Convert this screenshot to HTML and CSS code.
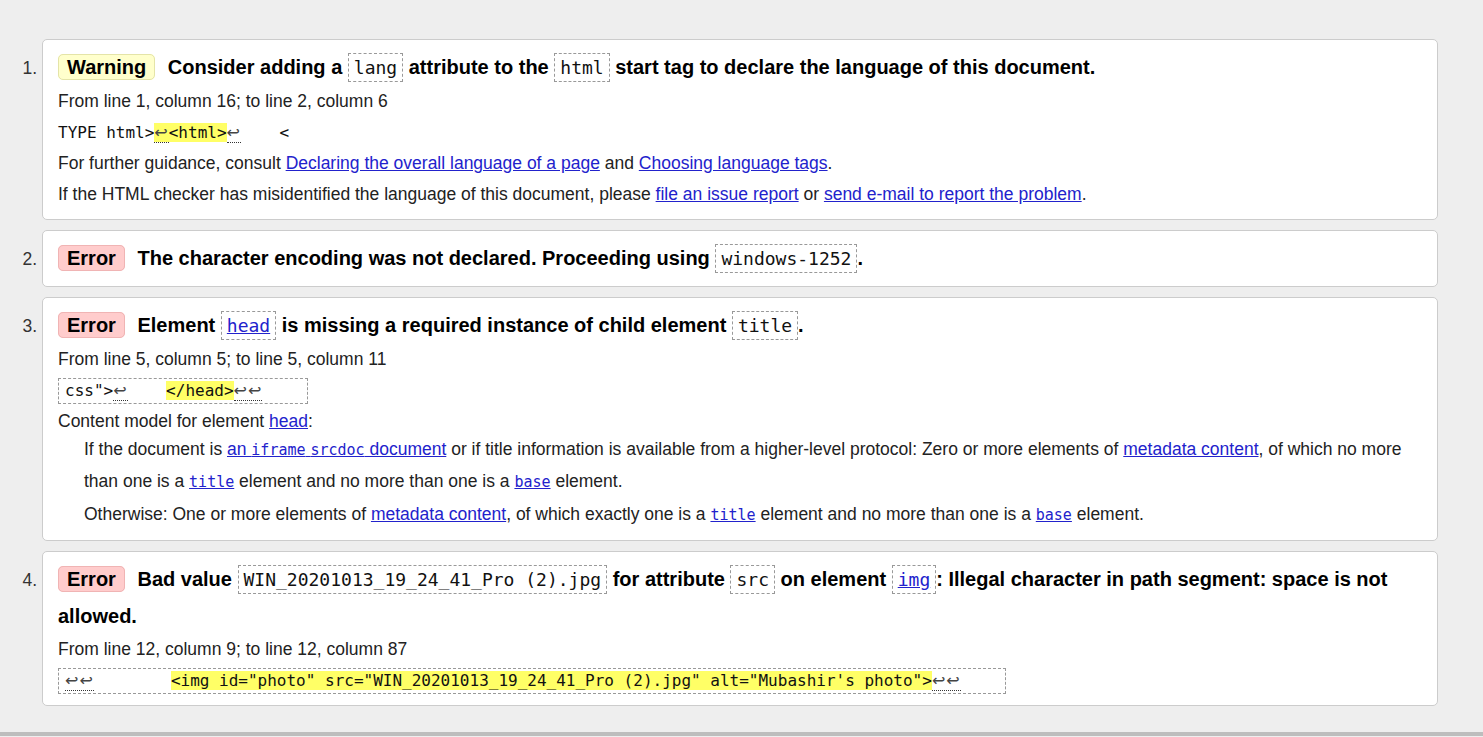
FILE: index.html
```html
<!DOCTYPE html>
<html lang="en">
<head>
<meta charset="utf-8">
<title>Validator results</title>
<link rel="stylesheet" href="styles.css">
</head>
<body>
<ol class="results">
  <li class="card">
    <p class="msg"><span class="badge warn">Warning</span> Consider adding a <code class="kw">lang</code> attribute to the <code class="kw">html</code> start tag to declare the language of this document.</p>
    <p>From line 1, column 16; to line 2, column 6</p>
    <p><code class="extract plain">TYPE html&gt;<span class="hl"><span class="lf">↩</span>&lt;html&gt;</span><span class="lf">↩</span>    &lt;</code></p>
    <p>For further guidance, consult <a href="#">Declaring the overall language of a page</a> and <a href="#">Choosing language tags</a>.</p>
    <p>If the HTML checker has misidentified the language of this document, please <a href="#">file an issue report</a> or <a href="#">send e-mail to report the problem</a>.</p>
  </li>
  <li class="card">
    <p class="msg"><span class="badge err">Error</span> The character encoding was not declared. Proceeding using <code class="kw">windows-1252</code>.</p>
  </li>
  <li class="card">
    <p class="msg"><span class="badge err">Error</span> Element <code class="kw"><a href="#">head</a></code> is missing a required instance of child element <code class="kw">title</code>.</p>
    <p>From line 5, column 5; to line 5, column 11</p>
    <p><code class="extract boxed">css"&gt;<span class="lf">↩</span>    <span class="hl">&lt;/head&gt;</span><span class="lf">↩↩</span>    </code></p>
    <p>Content model for element <a href="#">head</a>:</p>
    <div class="cm-list">
      <p class="cm-item">If the document is <a href="#">an <code>iframe</code> <code>srcdoc</code> document</a> or if title information is available from a higher-level protocol: Zero or more elements of <a href="#">metadata content</a>, of which no more than one is a <a href="#"><code>title</code></a> element and no more than one is a <a href="#"><code>base</code></a> element.</p>
      <p class="cm-item">Otherwise: One or more elements of <a href="#">metadata content</a>, of which exactly one is a <a href="#"><code>title</code></a> element and no more than one is a <a href="#"><code>base</code></a> element.</p>
    </div>
  </li>
  <li class="card">
    <p class="msg"><span class="badge err">Error</span> Bad value <code class="kw">WIN_20201013_19_24_41_Pro (2).jpg</code> for attribute <code class="kw">src</code> on element <code class="kw"><a href="#">img</a></code>: Illegal character in path segment: space is not allowed.</p>
    <p>From line 12, column 9; to line 12, column 87</p>
    <p><code class="extract boxed"><span class="lf">↩↩</span>        <span class="hl">&lt;img id="photo" src="WIN_20201013_19_24_41_Pro (2).jpg" alt="Mubashir's photo"&gt;</span><span class="lf">↩↩</span>    </code></p>
  </li>
</ol>
<div class="footer"></div>
</body>
</html>
```

FILE: styles.css
```css
* {
  box-sizing: border-box;
}

html,
body {
  margin: 0;
}

body {
  background: #eeeeee;
  font-family: "Liberation Sans", Arial, sans-serif;
  font-size: 17.5px;
  color: #222222;
}

.results {
  margin: 39px 0 0;
  padding: 0 45px 0 42px;
  list-style: decimal;
}

.results > li::marker {
  color: #333333;
  font-size: 17.5px;
}

.card {
  background: #ffffff;
  border: 1px solid #cccccc;
  border-radius: 5px;
  padding: 9px 15px 9px;
  margin-bottom: 10px;
}

p {
  margin: 0;
  line-height: 31px;
}

a {
  color: #2222cc;
  text-decoration: underline;
}

code {
  font-family: "DejaVu Sans Mono", "Liberation Mono", monospace;
  font-size: 15px;
}

.msg {
  font-size: 20px;
  font-weight: bold;
  line-height: 36px;
  color: #000000;
}

.badge {
  padding: 1px 8px;
  border: 1px solid;
  border-radius: 5px;
  margin-right: 7px;
}

.warn {
  background: #ffffcc;
  border-color: #e4e4a8;
}

.err {
  background: #ffcccc;
  border-color: #f0b4b4;
}

.msg .kw {
  font-size: 18px;
  font-weight: normal;
  border: 1px dashed #999999;
  padding: 3px 5px;
  background: #ffffff;
  color: #111111;
}

.msg .kw a {
  color: #2222cc;
}

.extract {
  font-size: 16px;
  white-space: pre;
  color: #111111;
}

.extract.boxed {
  display: inline-block;
  border: 1px dashed #999999;
  padding: 2px 6px;
  line-height: 20px;
  vertical-align: middle;
}

.hl {
  background: #ffff66;
}

.lf {
  font-family: "DejaVu Sans", sans-serif;
  font-size: 16px;
  letter-spacing: 1px;
  color: #444444;
  border-bottom: 1px dotted #333333;
}

.cm-list {
  margin-top: -3px;
}

.cm-item {
  padding-left: 26px;
}

.cm-item + .cm-item {
  margin-top: 1px;
}

.footer {
  margin-top: 26px;
  border-top: 4px solid #bdbdbd;
  height: 40px;
}
```
